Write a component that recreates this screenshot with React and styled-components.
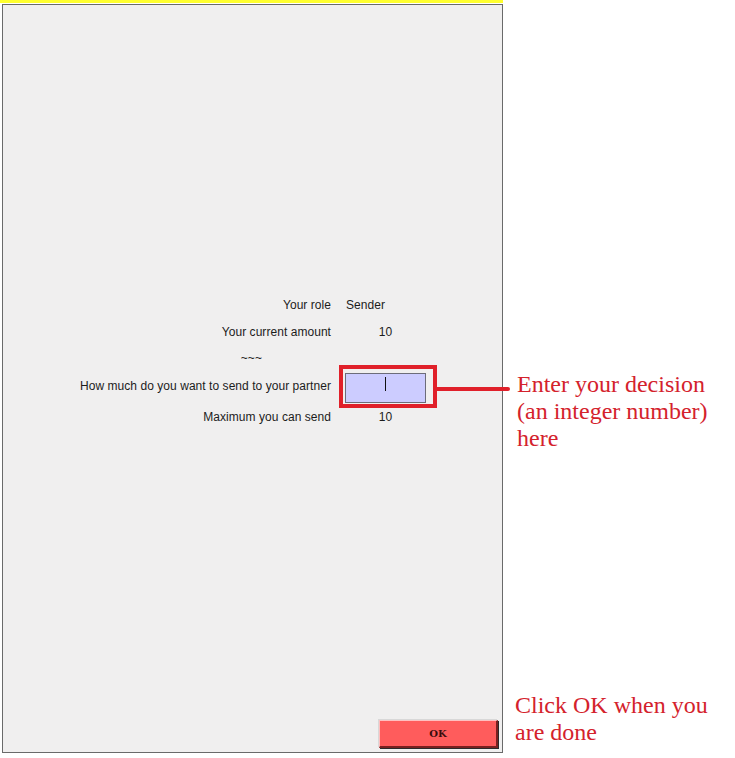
import React from "react";
import styled, { createGlobalStyle } from "styled-components";

const GlobalStyle = createGlobalStyle`
  html, body {
    margin: 0;
    padding: 0;
    background: #ffffff;
  }
  body {
    font-family: "Liberation Sans", Arial, sans-serif;
  }
`;

const Page = styled.div`
  display: flex;
  align-items: flex-start;
  width: 735px;
  height: 758px;
  overflow: hidden;
`;

const Screen = styled.div`
  display: flex;
  flex-direction: column;
  width: 503px;
  flex-shrink: 0;
`;

const TopBar = styled.div`
  height: 3px;
  background: #ffff2e;
`;

const Panel = styled.div`
  box-sizing: border-box;
  margin: 1px 0 0 2px;
  width: 501px;
  height: 749px;
  border: 1px solid #6a6a6a;
  background: #f0efef;
  display: flex;
  flex-direction: column;
`;

const Form = styled.div`
  display: grid;
  grid-template-columns: 328px 81px;
  grid-template-rows: 27px 27px 26px 32px 28px;
  column-gap: 14px;
  align-items: center;
  margin-top: 286px;
  font-size: 12px;
  letter-spacing: 0.05px;
  color: #1c1c1c;
`;

const Label = styled.div`
  text-align: right;
  white-space: nowrap;
  padding-right: ${(p) => p.$pad || 0}px;
  margin-top: ${(p) => p.$shift || 0}px;
`;

const Value = styled.div`
  text-align: ${(p) => (p.$center ? "center" : "left")};
  padding-left: ${(p) => (p.$center ? 0 : 1)}px;
  white-space: nowrap;
`;

const InputCell = styled.div`
  position: relative;
  align-self: end;
`;

const InputBox = styled.div`
  box-sizing: border-box;
  width: 81px;
  height: 30px;
  border: 1px solid #6c6c7a;
  background: #ccccff;
  position: relative;

  &::after {
    content: "";
    position: absolute;
    left: 39px;
    top: 3px;
    width: 1px;
    height: 14px;
    background: #111;
  }
`;

const Highlight = styled.div`
  position: absolute;
  left: -6px;
  top: -8px;
  right: -11px;
  bottom: -5px;
  border: 4px solid #e0202a;
  pointer-events: none;
`;

const Pointer = styled.div`
  position: absolute;
  left: 100%;
  top: 18px;
  width: 77px;
  height: 4px;
  background: #e0202a;
  border-radius: 0 2px 2px 0;
`;

const Spacer = styled.div`
  flex: 1;
`;

const Footer = styled.div`
  display: flex;
  justify-content: flex-end;
  padding: 0 4px 4px 0;
`;

const OkButton = styled.button`
  box-sizing: border-box;
  width: 119px;
  height: 28px;
  background: #ff5c5c;
  border-style: solid;
  border-width: 1px 2px 2px 1px;
  border-color: #ffc0c0 #7a2020 #7a2020 #ffc0c0;
  box-shadow: -1px -1px 0 #d8d8d8, 1px 1px 0 #2a2a2a;
  font-family: "DejaVu Serif", "Liberation Serif", serif;
  font-weight: bold;
  font-size: 10px;
  color: #3a0c0c;
  padding: 0;
  cursor: pointer;
`;

const Notes = styled.div`
  display: flex;
  flex-direction: column;
  margin-left: 14px;
  font-family: "Liberation Serif", "Times New Roman", serif;
  font-size: 24px;
  line-height: 27px;
  color: #d4222c;
`;

const Note = styled.div`
  margin-top: ${(p) => p.$top}px;
  margin-left: ${(p) => p.$left || 0}px;
  white-space: nowrap;
`;

export default function App() {
  return (
    <>
      <GlobalStyle />
      <Page>
        <Screen>
          <TopBar />
          <Panel>
            <Form>
              <Label>Your role</Label>
              <Value>Sender</Value>

              <Label>Your current amount</Label>
              <Value $center>10</Value>

              <Label $pad={69}>~~~</Label>
              <div />

              <Label $shift={-3}>How much do you want to send to your partner</Label>
              <InputCell>
                <InputBox />
                <Highlight>
                  <Pointer />
                </Highlight>
              </InputCell>

              <Label>Maximum you can send</Label>
              <Value $center>10</Value>
            </Form>
            <Spacer />
            <Footer>
              <OkButton>OK</OkButton>
            </Footer>
          </Panel>
        </Screen>
        <Notes>
          <Note $top={371}>
            Enter your decision
            <br />
            (an integer number)
            <br />
            here
          </Note>
          <Note $top={240} $left={-2}>
            Click OK when you
            <br />
            are done
          </Note>
        </Notes>
      </Page>
    </>
  );
}
